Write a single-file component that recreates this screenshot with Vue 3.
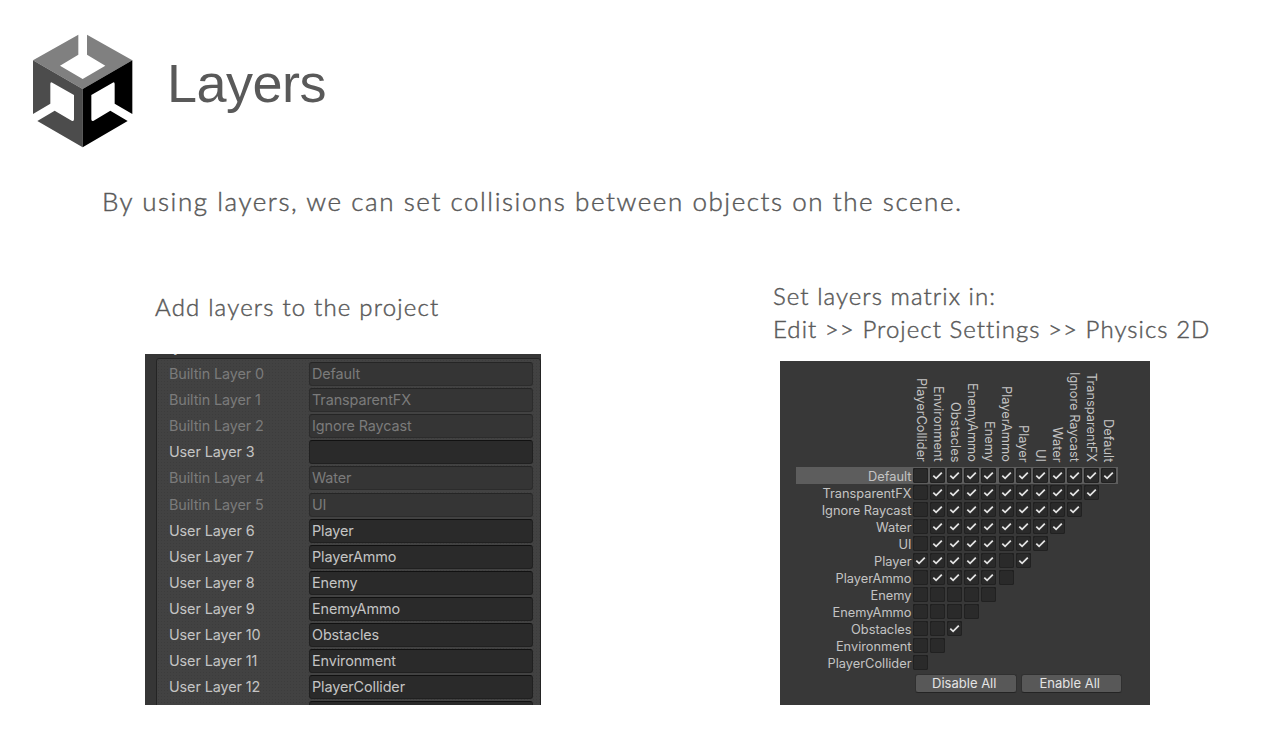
<script setup>
const fields = [
  ['Builtin Layer 0', 'Default'], ['Builtin Layer 1', 'TransparentFX'], ['Builtin Layer 2', 'Ignore Raycast'],
  ['User Layer 3', ''], ['Builtin Layer 4', 'Water'], ['Builtin Layer 5', 'UI'], ['User Layer 6', 'Player'],
  ['User Layer 7', 'PlayerAmmo'], ['User Layer 8', 'Enemy'], ['User Layer 9', 'EnemyAmmo'],
  ['User Layer 10', 'Obstacles'], ['User Layer 11', 'Environment'], ['User Layer 12', 'PlayerCollider'], ['', ''],
]
const rows = [
  ['Default', '011111111111'], ['TransparentFX', '01111111111'], ['Ignore Raycast', '0111111111'],
  ['Water', '011111111'], ['UI', '01111111'], ['Player', '1111101'], ['PlayerAmmo', '011110'],
  ['Enemy', '00000'], ['EnemyAmmo', '0000'], ['Obstacles', '001'], ['Environment', '00'], ['PlayerCollider', '0'],
]
const columns = rows.map((r) => r[0]).reverse()
</script>

<template>
  <main class="slide">
    <header>
      <svg class="logo" viewBox="36 24 306 348" width="102" height="116">
        <path fill="#808080" d="M175 29 39 106 188 192 337 106 201 29V89L256 122 188 162 120 122 175 89Z" />
        <path fill="#4c4c4c" d="M39 106 188 192V367L52 288 104 257 155 287Q162 290 162 283V210L97 173Q91 170 91 177V236L39 267Z" />
        <path fill="#000" d="M337 106 188 192V367L323 288 271 257 221 287Q214 290 214 283V210L278 173Q284 170 284 177V236L337 267Z" />
      </svg>
      <h1>Layers</h1>
    </header>
    <p class="intro">By using layers, we can set collisions between objects on the scene.</p>
    <div class="body">
      <section class="left">
        <p class="cap cap-add">Add layers to the project</p>
        <div class="panel">
          <span class="cut">Layers</span>
          <div class="box">
            <div v-for="(f, i) in fields" :key="i" class="field-row" :class="{ off: f[0].startsWith('B') }">
              <span class="name">{{ f[0] }}</span><span class="field">{{ f[1] }}</span>
            </div>
          </div>
        </div>
      </section>
      <section class="right">
        <p class="cap cap-set">Set layers matrix in:</p>
        <p class="cap cap-path">Edit &gt;&gt; Project Settings &gt;&gt; Physics 2D</p>
        <div class="matrix">
          <div class="cols"><span v-for="c in columns" :key="c">{{ c }}</span></div>
          <div v-for="(r, i) in rows" :key="r[0]" class="mrow" :class="{ hot: i === 0 }">
            <span class="label">{{ r[0] }}</span>
            <span v-for="(v, j) in r[1]" :key="j" class="cell">
              <svg v-if="v === '1'" viewBox="0 0 15 15" width="15" height="15"><path d="M3.3 7.7 6.1 10.3 11.8 4.7" /></svg>
            </span>
          </div>
          <div class="buttons"><button>Disable All</button><button>Enable All</button></div>
        </div>
      </section>
    </div>
  </main>
</template>

<style>
body { margin: 0; background: #fff; }
</style>

<style scoped>
* { box-sizing: border-box; }
.slide { width: 1283px; height: 748px; overflow: hidden; background: #fff; color: #595959; font-family: Lato, sans-serif; font-weight: 300; }
header { display: flex; height: 180px; padding: 33px 0 0 32px; }
.logo { flex: none; }
h1 { margin: 18px 0 0 33px; font: 400 54px/64px "Liberation Sans", Arial, sans-serif; letter-spacing: -0.5px; }
p { margin: 0; white-space: nowrap; -webkit-text-stroke: 0.45px #595959; }
.intro { height: 44px; padding-left: 102px; font-size: 26px; line-height: 43px; letter-spacing: 1.55px; }
.body { display: flex; height: 524px; }
.left { width: 635px; padding: 64px 0 0 145px; flex: none; }
.right { padding: 56px 0 0 145px; }
.cap { font-size: 24px; line-height: 33px; letter-spacing: 1.18px; }
.cap-add { height: 66px; line-height: 38px; padding-left: 10px; }
.cap-set, .cap-path { position: relative; top: -1px; margin-left: -7px; letter-spacing: 1.05px; }
.panel { position: relative; width: 396px; height: 351px; padding: 4px 0 0 11px; overflow: hidden; background: #363636; font: 400 14.4px/24px Inter, sans-serif; color: #c4c4c4; }
.cut { position: absolute; left: 12px; top: -19px; }
.box { height: 360px; padding: 3.3px 7px 0 12px; border: 1px solid #242424; border-radius: 3px; background: radial-gradient(circle, #3c3c3c 0.6px, transparent 0.9px) 0 0 / 3px 3px, #424242; }
.field-row { display: flex; height: 24px; margin-bottom: 2.06px; }
.name { width: 140px; letter-spacing: -0.1px; }
.field { width: 224px; padding-left: 2px; border: 1px solid #202020; border-top-color: #111; border-radius: 3px; background: #2a2a2a; line-height: 22px; letter-spacing: -0.1px; }
.off { color: #7b7b7b; }
.off .field { background: #353535; border-color: #2c2c2c; border-top-color: #252525; }
.matrix { width: 370px; height: 344px; margin-top: 15px; padding-left: 16px; background: #383838; font: 400 12.8px/17px Inter, sans-serif; color: #c4c4c4; }
.cols { display: flex; height: 106px; padding: 0 0 5px 116.5px; align-items: flex-end; }
.cols span { width: 17.05px; flex: none; writing-mode: vertical-rl; white-space: nowrap; line-height: 17px; }
.mrow { display: flex; width: 322px; height: 17.03px; align-items: center; }
.hot { background: #5d5d5d; }
.label { width: 115.5px; margin-right: 1.8px; padding-top: 1px; text-align: right; flex: none; white-space: nowrap; }
.cell { width: 15px; height: 15px; margin-right: 2.05px; flex: none; border-radius: 2px; background: #2a2a2a; box-shadow: inset 0 0 0 1px #212121, inset 0 1px #111; }
.cell svg { display: block; fill: none; stroke: #e4e4e4; stroke-width: 1.8; }
.buttons { display: flex; gap: 4px; padding: 3px 0 0 119px; }
button { width: 101.5px; height: 19px; padding: 0 3px 0 0; border: 1px solid #303030; border-bottom-color: #242424; border-radius: 3px; background: #585858; color: #e4e4e4; font: 400 13px/17px Inter, sans-serif; }
</style>
